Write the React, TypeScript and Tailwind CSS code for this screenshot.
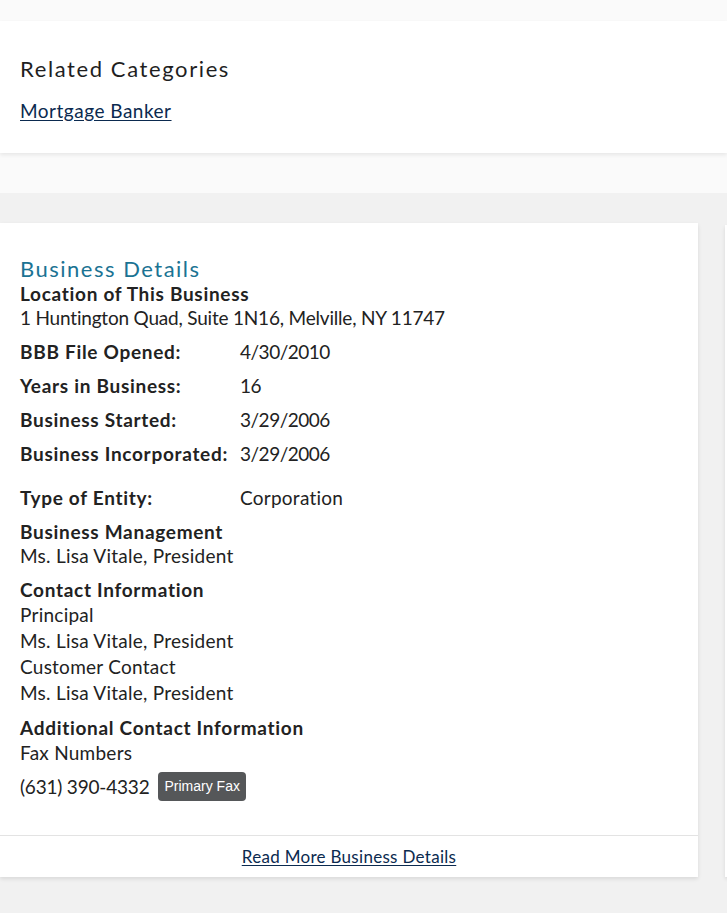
import React from 'react';

const rows = [
  { label: 'BBB File Opened:', value: '4/30/2010' },
  { label: 'Years in Business:', value: '16' },
  { label: 'Business Started:', value: '3/29/2006' },
  { label: 'Business Incorporated:', value: '3/29/2006' },
];

// body copy sizes
const body = 'text-[19px] leading-[24px] tracking-[0.25px]';
const label = 'text-[19px] leading-[24px] font-bold tracking-[0.7px]';

export default function App() {
  return (
    <div className="min-h-screen bg-[#f1f1f1] text-[#222222] font-['Lato',sans-serif] overflow-hidden">
      <div className="bg-[#fafafa] pt-[21px] pb-[40px]">
        <section className="bg-white h-[132px] px-5 pt-[34px] shadow-[0_2px_4px_rgba(0,0,0,0.08)]">
          <h2 className="text-[22px] leading-[28px] tracking-[1.6px] text-[#1f1f1f]">Related Categories</h2>
          <a href="#" className="block mt-[16px] text-[19px] leading-[24px] tracking-[0.5px] text-[#0b2a4f] underline underline-offset-2">
            Mortgage Banker
          </a>
        </section>
      </div>

      <div className="flex gap-[27px] pt-[30px] pb-[36px]">
        <section className="w-[698px] shrink-0 bg-white shadow-[0_2px_4px_rgba(0,0,0,0.1)]">
          <div className="px-5 pt-[33px] pb-[34px]">
            <h2 className="text-[22px] leading-[26px] tracking-[1.5px] text-[#1b7393]">Business Details</h2>
            <h3 className={label}>Location of This Business</h3>
            <p className="text-[19px] leading-[24px] tracking-[-0.2px]">1 Huntington Quad, Suite 1N16, Melville, NY 11747</p>

            {rows.map(r => (
              <div key={r.label} className="flex mt-[10px]">
                <span className={`w-[220px] ${label}`}>{r.label}</span>
                <span className="text-[19px] leading-[24px] tracking-[-0.5px]">{r.value}</span>
              </div>
            ))}

            <div className="flex mt-[20px]">
              <span className={`w-[220px] ${label}`}>Type of Entity:</span>
              <span className={body}>Corporation</span>
            </div>

            <h3 className={`mt-[10px] ${label}`}>Business Management</h3>
            <p className={body}>Ms. Lisa Vitale, President</p>

            <h3 className={`mt-[10px] ${label}`}>Contact Information</h3>
            <div className="text-[19px] leading-[26px] tracking-[0.25px]">
              <p>Principal</p>
              <p>Ms. Lisa Vitale, President</p>
              <p>Customer Contact</p>
              <p>Ms. Lisa Vitale, President</p>
            </div>

            <h3 className={`mt-[10px] ${label}`}>Additional Contact Information</h3>
            <p className="text-[19px] leading-[26px] tracking-[0.25px]">Fax Numbers</p>
            <div className="flex items-center gap-[9px] mt-[6px]">
              <span className="text-[19px] leading-[24px] tracking-[-0.2px]">(631) 390-4332</span>
              <span className="h-[29px] px-[6px] flex items-center rounded-[4px] bg-[#555759] text-white text-[14px] font-['Liberation_Sans',Arial,sans-serif]">
                Primary Fax
              </span>
            </div>
          </div>
          <div className="border-t border-[#e3e3e3] h-[42px] flex items-center justify-center">
            <a href="#" className="text-[17px] tracking-[0.3px] text-[#0b2a4f] underline underline-offset-2">Read More Business Details</a>
          </div>
        </section>
        <section className="w-[300px] shrink-0 mt-[2px] bg-white shadow-[0_2px_4px_rgba(0,0,0,0.1)]" />
      </div>
    </div>
  );
}
